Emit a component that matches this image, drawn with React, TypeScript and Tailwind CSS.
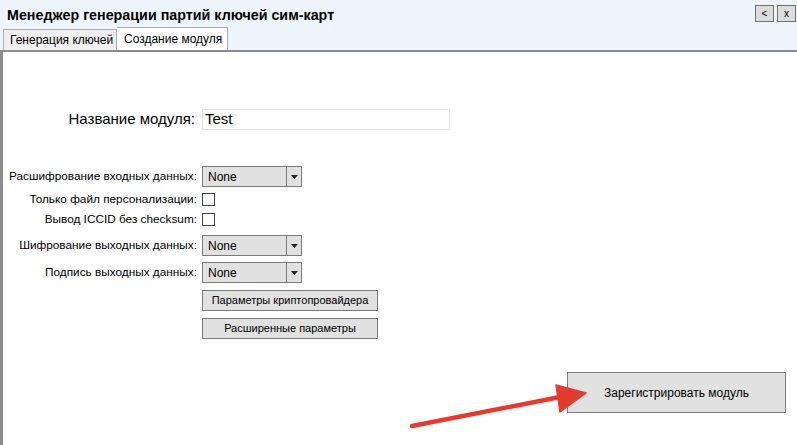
import React from "react";

const font = { fontFamily: '"Liberation Sans", Arial, sans-serif' };

function Dropdown() {
  return (
    <div className="flex h-[21px] w-[100px] border border-[#7a7a7a] bg-[#e1e1e1]">
      <div className="flex flex-1 items-center pl-[5px] text-[12px] text-black">None</div>
      <div className="flex w-[15px] items-center justify-center border-l border-[#7a7a7a]">
        <svg width="7" height="4" viewBox="0 0 7 4"><path d="M0 0h7L3.5 4z" fill="#222" /></svg>
      </div>
    </div>
  );
}

function Checkbox() {
  return <div className="h-[13px] w-[13px] border border-[#444] bg-white" />;
}

function Row({ label, children, top, h }: { label: string; children: React.ReactNode; top: string; h: string }) {
  return (
    <div className={`flex items-center ${top} ${h}`}>
      <div className="w-[194px] whitespace-nowrap text-right text-[11.8px] text-black">{label}</div>
      <div className="ml-[5px] flex items-center">{children}</div>
    </div>
  );
}

export default function App() {
  return (
    <div className="relative h-[445px] w-[797px] overflow-hidden bg-white" style={font}>
      <div className="relative h-[50px] bg-[#eef5fd]">
        <div className="whitespace-nowrap pl-[7px] pt-[5px] text-[14.3px] font-bold leading-[20px] text-black">
          Менеджер генерации партий ключей сим-карт
        </div>
        <div className="absolute right-[1px] top-[5px] flex gap-[3px]">
          <div className="flex h-[17px] w-[19px] items-center justify-center border border-[#707070] bg-[#dddddd] text-[10px] leading-none">&lt;</div>
          <div className="flex h-[17px] w-[19px] items-center justify-center border border-[#707070] bg-[#dddddd] text-[10px] leading-none">x</div>
        </div>
        <div className="absolute bottom-0 left-[3px] flex items-end">
          <div className="flex h-[21px] w-[114px] items-center whitespace-nowrap border border-b-0 border-[#acacac] bg-[#f0f0f0] pl-[6px] text-[12px] text-black">
            Генерация ключей
          </div>
          <div className="flex h-[23px] w-[111px] items-center whitespace-nowrap border border-b-0 border-l-0 border-[#acacac] bg-white pl-[7px] text-[12px] text-black">
            Создание модуля
          </div>
        </div>
      </div>
      <div className="h-[2px] bg-[#8c8c8c]" />
      <div className="flex h-[393px] flex-col border-l-[3px] border-[#8c8c8c] pt-[57px]">
        <div className="flex h-[21px] items-center">
          <div className="w-[192px] whitespace-nowrap text-right text-[15px] text-black">Название модуля:</div>
          <div className="ml-[7px] flex h-[21px] w-[248px] items-center border border-[#e3e3e3] pl-[2px] text-[15px] text-black">Test</div>
        </div>
        <Row label="Расшифрование входных данных:" top="mt-[36px]" h="h-[21px]"><Dropdown /></Row>
        <Row label="Только файл персонализации:" top="mt-[4px]" h="h-[17px]"><Checkbox /></Row>
        <Row label="Вывод ICCID без checksum:" top="mt-[3px]" h="h-[17px]"><Checkbox /></Row>
        <Row label="Шифрование выходных данных:" top="mt-[7px]" h="h-[21px]"><Dropdown /></Row>
        <Row label="Подпись выходных данных:" top="mt-[6px]" h="h-[21px]"><Dropdown /></Row>
        <div className="mt-[7px] flex pl-[199px]">
          <div className="flex h-[21px] w-[176px] items-center justify-center whitespace-nowrap border border-[#7a7a7a] bg-[#e1e1e1] text-[11px] text-black">Параметры криптопровайдера</div>
        </div>
        <div className="mt-[7px] flex pl-[199px]">
          <div className="flex h-[21px] w-[176px] items-center justify-center whitespace-nowrap border border-[#7a7a7a] bg-[#e1e1e1] text-[11px] text-black">Расширенные параметры</div>
        </div>
        <div className="mt-[33px] flex justify-end pr-[11px]">
          <div className="flex h-[41px] w-[219px] items-center justify-center whitespace-nowrap border border-[#7a7a7a] bg-[#e1e1e1] text-[12px] text-black">Зарегистрировать модуль</div>
        </div>
      </div>
      <svg className="pointer-events-none absolute left-0 top-0" width="797" height="445" viewBox="0 0 797 445">
        <path d="M412 426 L565 396" stroke="#e53b2f" strokeWidth="4.5" strokeLinecap="round" fill="none" />
        <path d="M556 385 L586 393 L560 412 Z" fill="#e53b2f" stroke="#e53b2f" strokeWidth="1.5" strokeLinejoin="round" />
      </svg>
    </div>
  );
}
